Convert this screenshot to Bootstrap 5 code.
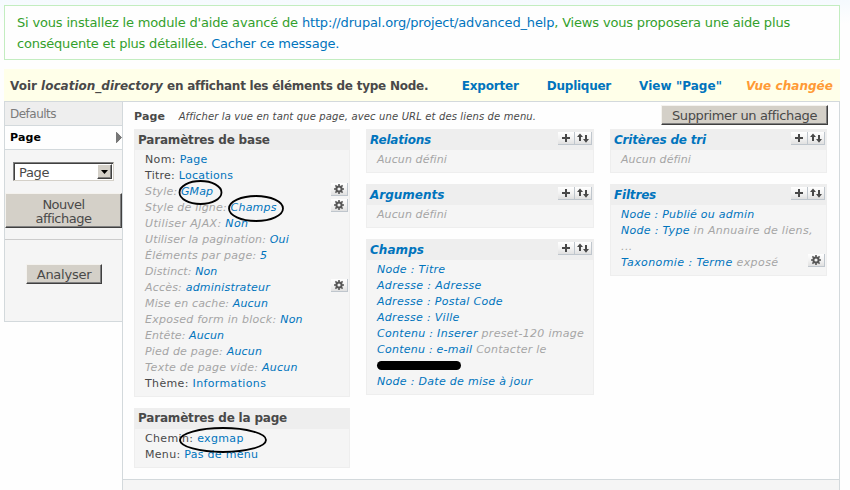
<!DOCTYPE html>
<html lang="fr">
<head>
<meta charset="utf-8">
<meta name="viewport" content="width=device-width, initial-scale=1">
<title>Vue location_directory</title>
<link rel="stylesheet" href="https://cdn.jsdelivr.net/npm/bootstrap@5.3.0/dist/css/bootstrap.min.css">
<style>
body{font-family:Verdana,"DejaVu Sans",sans-serif;font-size:11px;color:#494949;background:linear-gradient(#f5fafe,#fefefe 24px);width:850px;height:490px;overflow:hidden}
a{color:#0074bd;text-decoration:none}
.page{width:836px;margin-left:4px}
.notice{margin-top:5px;height:55px;border:1px solid #c3edc0;background:#fefefe;color:#33a02c;font-size:13px;line-height:21px;padding:6px 0 0 12px;letter-spacing:-.17px;white-space:nowrap}
.notice .second{letter-spacing:-.21px}
.titlebar{margin-top:9px;height:32px;background:#ffffe9;font-size:12px;font-weight:700;white-space:nowrap;padding:1px 7px 0 6px}
.changed{color:#ff9a35}
.editor{height:389px}
.side{width:118px;height:221px;border:1px solid #d3d9dc;border-right:0;background:#f5f5f5}
.tab-item{height:24px;border-bottom:1px solid #d3d9dc;padding-left:5px;line-height:24px;font-size:12px}
.tab-off{background:#eee;color:#7b7b7b;letter-spacing:-.51px}
.tab-on{background:#fefefe;color:#000;font-size:11px;font-weight:700;letter-spacing:.15px}
.tab-on span{line-height:25px}
.main{border:1px solid #d3d9dc;border-bottom:0;background:#fefefe;width:718px}
.main-top{height:27px;padding:0 11px}
.main-title{line-height:17px;padding-top:6px}
.main-title b{margin-right:10px}
.hint{font-size:10px;letter-spacing:.14px}
.old-btn{background:#d4d0c8;border:1px solid;border-color:#f4f2ee #404040 #404040 #f4f2ee;box-shadow:inset -1px -1px #808080;color:#494949;font-size:13px;padding:2px 0 0;text-align:center;line-height:14px;border-radius:0}
.old-select{width:101px;height:19px;margin:12px 0 0 8px;background:#fff;border:1px solid;border-color:#808080 #d4d0c8 #d4d0c8 #808080;box-shadow:inset 1px 1px #404040;padding:1px 1px 1px 5px;font-size:13px;letter-spacing:-.3px}
.old-select .caption{padding-top:2px}
.old-select .arrow{width:15px;height:15px;background:#d4d0c8;border:1px solid;border-color:#fff #404040 #404040 #fff;box-shadow:inset -1px -1px #808080}
.sep{border-top:1px solid #ccc;margin-top:11px}
#new-display{width:117px;height:35px;margin-top:12px}
#analyse{width:76px;height:20px;margin:24px 0 0 21px}
#remove{width:167px;height:20px;margin-top:3px;letter-spacing:-.36px}
.columns{padding-left:11px}
.columns>div{row-gap:11px;flex:none}
.w-base{width:216px}.w-mid{width:228px}.w-right{width:217px}
.panel{border:1px solid #eee;background:#f5f5f5;padding-bottom:5px}
.panel-head{height:20px;background:#eee;font-size:12px;font-weight:700;line-height:21px;padding:0 1px 0 3px;white-space:nowrap;margin-bottom:1px}
.panel-head.short{height:20px;line-height:19px}
.panel-head svg{margin-bottom:3px}
.entry{height:16px;line-height:18px;padding:0 1px 0 10px;white-space:nowrap}
.entry.dim{color:#a5a5a5;font-style:italic}
.panel-head svg,.entry svg.gear{flex:none;display:block}
.ring{position:absolute;overflow:visible;z-index:2;pointer-events:none}
.ring ellipse{fill:none;stroke:#000;stroke-width:1.8}
#ring-gmap{left:-2px;top:-4px}
#ring-champs{left:-2px;top:-5px}
#ring-path{left:-17px;top:-4px}
.redacted{width:84px;height:9px;background:#000;border-radius:5px}
.bottom-band{border-top:1px solid #d3d9dc;background:#f5f5f5;height:11px}
/* letter-spacing steps */
.n5{letter-spacing:-.5px}.n25{letter-spacing:-.25px}.n2{letter-spacing:-.19px}.p0{letter-spacing:0}.p05{letter-spacing:.05px}
.p1{letter-spacing:.1px}.p15{letter-spacing:.15px}.p2{letter-spacing:.2px}.p25{letter-spacing:.25px}.p3{letter-spacing:.3px}.p35{letter-spacing:.35px}.p4{letter-spacing:.41px}
</style>
<script src="https://cdn.jsdelivr.net/npm/bootstrap@5.3.0/dist/js/bootstrap.bundle.min.js"></script>
</head>
<body>
<svg width="0" height="0" class="position-absolute">
<defs>
<linearGradient id="g" x2="0" y2="1"><stop stop-color="#fff"/><stop offset=".5" stop-color="#f2f2f2"/><stop offset="1" stop-color="#ddd"/></linearGradient>
<symbol id="tools" viewBox="0 0 34 13"><path fill="url(#g)" d="M0 0h34v13H0z"/><path fill="#bfc6cd" d="M16 0h1v13h-1zM33 0h1v13h-1zM0 12h34v1H0z"/><path stroke="#494949" stroke-width="2" fill="none" d="M4 6h8M8 2v8"/><path fill="#494949" d="M19 5l3-3.5L25 5h-2v4h-2V5zM25 7h2V3h2v4h2l-3 3.7z"/></symbol>
<symbol id="cog" viewBox="0 0 17 13"><path fill="url(#g)" d="M0 0h17v13H0z"/><path fill="#bfc6cd" d="M16 0h1v13h-1zM0 12h17v1H0z"/><g fill="none" stroke="#555"><circle cx="8" cy="6" r="2.6" stroke-width="2"/><path stroke-width="1.6" d="M8 1v2M8 9v2M3 6h2M11 6h2M4.4 2.4l1.4 1.4M10.2 8.2l1.4 1.4M4.4 9.6l1.4-1.4M10.2 3.8l1.4-1.4"/></g></symbol>
</defs>
</svg>
<div class="page d-flex flex-column">
  <div class="notice">
    <div>Si vous installez le module d'aide avancé de <a href="#">http://drupal.org/project/advanced_help</a>, Views vous proposera une aide plus</div>
    <div class="second">conséquente et plus détaillée. <a href="#">Cacher ce message.</a></div>
  </div>
  <div class="titlebar d-flex justify-content-between align-items-center">
    <div><span class="p0">Voir <em>location_directory</em></span> <span class="n25">en affichant les éléments de type Node.</span></div>
    <div class="d-flex">
      <a href="#" class="n2">Exporter</a>
      <a href="#" class="n25 ms-4 ps-1">Dupliquer</a>
      <a href="#" class="p05 ms-4 ps-1">View "Page"</a>
      <em class="changed p05 ms-4">Vue changée</em>
    </div>
  </div>
  <div class="editor d-flex align-items-start">
    <div class="side">
      <div class="tab-item tab-off">Defaults</div>
      <div class="tab-item tab-on d-flex justify-content-between align-items-center"><span>Page</span><svg width="6" height="11"><path fill="#777" stroke="#494949" stroke-width=".6" d="M.5 .3l5 5.2-5 5.2z"/></svg></div>
      <div class="old-select d-flex justify-content-between align-items-center"><span class="caption">Page</span><span class="arrow d-flex align-items-center justify-content-center"><svg width="7" height="4"><path d="M0 0h7L3.5 4z"/></svg></span></div>
      <button class="old-btn n5 d-block" id="new-display">Nouvel<br>affichage</button>
      <div class="sep"></div>
      <button class="old-btn n25 d-block" id="analyse">Analyser</button>
    </div>
    <div class="main h-100 d-flex flex-column">
      <div class="main-top d-flex justify-content-between align-items-start">
        <div class="main-title text-nowrap"><b class="p15">Page</b> <em class="hint">Afficher la vue en tant que page, avec une URL et des liens de menu.</em></div>
        <button class="old-btn" id="remove">Supprimer un affichage</button>
      </div>
      <div class="columns d-flex align-items-start gap-3 flex-grow-1">
        <div class="w-base d-grid">
          <div class="panel">
            <div class="panel-head n2">Paramètres de base</div>
            <div class="entry p35">Nom: <a href="#">Page</a></div>
            <div class="entry p25">Titre: <a href="#">Locations</a></div>
            <div class="entry dim p15 d-flex justify-content-between"><span>Style: <a href="#" class="position-relative">GMap<svg class="ring" id="ring-gmap" width="43" height="23"><ellipse cx="21.5" cy="11.5" rx="21" ry="11.5"/></svg></a></span><svg class="gear" width="17" height="13"><use href="#cog"/></svg></div>
            <div class="entry dim p2 d-flex justify-content-between"><span>Style de ligne: <a href="#" class="position-relative">Champs<svg class="ring" id="ring-champs" width="54" height="25"><ellipse cx="27" cy="12.5" rx="27" ry="12.5"/></svg></a></span><svg class="gear" width="17" height="13"><use href="#cog"/></svg></div>
            <div class="entry dim p35">Utiliser AJAX: <a href="#">Non</a></div>
            <div class="entry dim p15">Utiliser la pagination: <a href="#">Oui</a></div>
            <div class="entry dim p2">Éléments par page: <a href="#">5</a></div>
            <div class="entry dim p1">Distinct: <a href="#">Non</a></div>
            <div class="entry dim p2 d-flex justify-content-between"><span>Accès: <a href="#">administrateur</a></span><svg class="gear" width="17" height="13"><use href="#cog"/></svg></div>
            <div class="entry dim p15">Mise en cache: <a href="#">Aucun</a></div>
            <div class="entry dim p25">Exposed form in block: <a href="#">Non</a></div>
            <div class="entry dim p1">Entête: <a href="#">Aucun</a></div>
            <div class="entry dim p2">Pied de page: <a href="#">Aucun</a></div>
            <div class="entry dim p25">Texte de page vide: <a href="#">Aucun</a></div>
            <div class="entry p35">Thème: <a href="#">Informations</a></div>
          </div>
          <div class="panel">
            <div class="panel-head short n2">Paramètres de la page</div>
            <div class="entry p35">Chemin: <a href="#" class="position-relative">exgmap<svg class="ring" id="ring-path" width="86" height="24"><ellipse cx="43" cy="12" rx="43" ry="12"/></svg></a></div>
            <div class="entry p3">Menu: <a href="#">Pas de menu</a></div>
          </div>
        </div>
        <div class="w-mid d-grid">
          <div class="panel">
            <div class="panel-head d-flex justify-content-between align-items-center"><a href="#" class="fst-italic n2">Relations</a><svg width="34" height="13"><use href="#tools"/></svg></div>
            <div class="entry dim p1">Aucun défini</div>
          </div>
          <div class="panel">
            <div class="panel-head d-flex justify-content-between align-items-center"><a href="#" class="fst-italic p0">Arguments</a><svg width="34" height="13"><use href="#tools"/></svg></div>
            <div class="entry dim p1">Aucun défini</div>
          </div>
          <div class="panel">
            <div class="panel-head d-flex justify-content-between align-items-center"><a href="#" class="fst-italic p05">Champs</a><svg width="34" height="13"><use href="#tools"/></svg></div>
            <div class="entry dim p3"><a href="#">Node : Titre</a></div>
            <div class="entry dim p35"><a href="#">Adresse : Adresse</a></div>
            <div class="entry dim p3"><a href="#">Adresse : Postal Code</a></div>
            <div class="entry dim p3"><a href="#">Adresse : Ville</a></div>
            <div class="entry dim p3"><a href="#">Contenu : Inserer</a> preset-120 image</div>
            <div class="entry dim p25"><a href="#">Contenu : e-mail</a> Contacter le</div>
            <div class="entry dim d-flex align-items-center"><div class="redacted"></div></div>
            <div class="entry dim p3"><a href="#">Node : Date de mise à jour</a></div>
          </div>
        </div>
        <div class="w-right d-grid">
          <div class="panel">
            <div class="panel-head d-flex justify-content-between align-items-center"><a href="#" class="fst-italic n2">Critères de tri</a><svg width="34" height="13"><use href="#tools"/></svg></div>
            <div class="entry dim p1">Aucun défini</div>
          </div>
          <div class="panel">
            <div class="panel-head d-flex justify-content-between align-items-center"><a href="#" class="fst-italic n2">Filtres</a><svg width="34" height="13"><use href="#tools"/></svg></div>
            <div class="entry dim p25"><a href="#">Node : Publié ou admin</a></div>
            <div class="entry dim p3"><a href="#">Node : Type</a> in Annuaire de liens,</div>
            <div class="entry dim p4">...</div>
            <div class="entry dim p4 d-flex justify-content-between"><span><a href="#">Taxonomie : Terme</a> exposé</span><svg class="gear" width="17" height="13"><use href="#cog"/></svg></div>
          </div>
        </div>
      </div>
      <div class="bottom-band"></div>
    </div>
  </div>
</div>
</body>
</html>
